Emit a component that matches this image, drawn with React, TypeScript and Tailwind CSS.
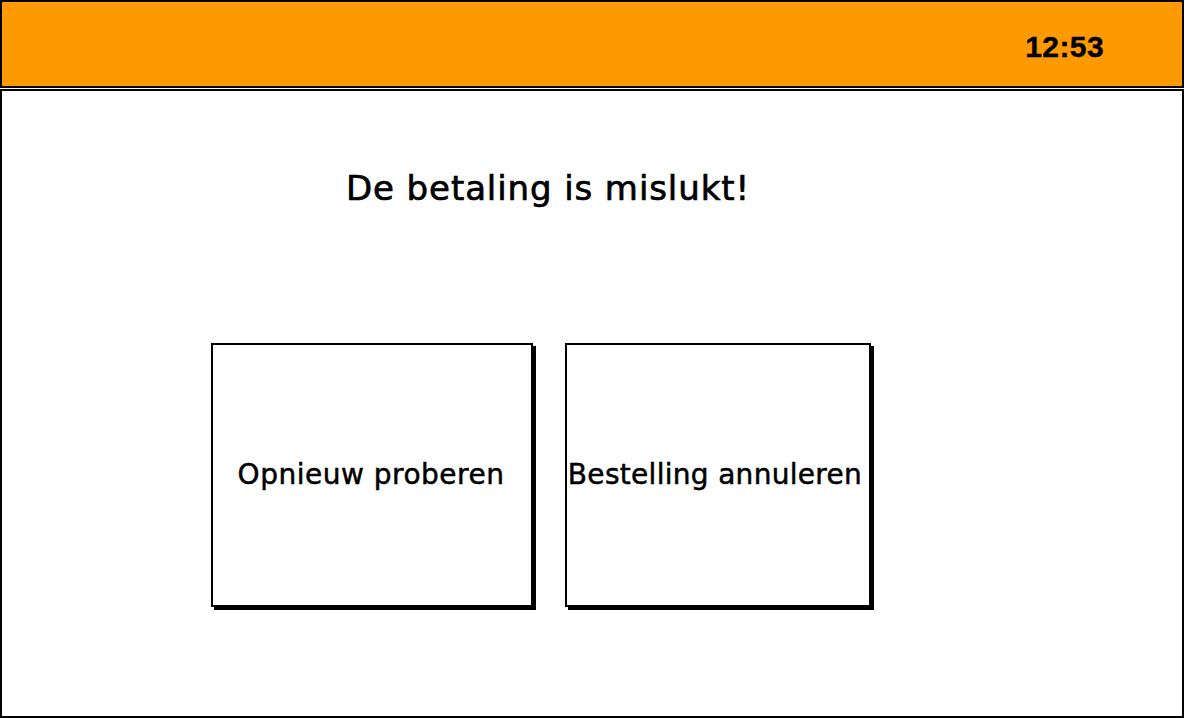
export default function App() {
  return (
    <div className="flex h-[718px] w-[1185px] flex-col bg-white font-['DejaVu_Sans',sans-serif] text-black">
      <header className="flex h-[88px] w-[1184px] items-center justify-end border-2 border-black bg-[#ff9900] pr-[78px] pt-[6px]">
        <span className="font-['Liberation_Sans',sans-serif] text-[30px] font-bold leading-none tracking-[0.4px] [-webkit-text-stroke:0.4px_black]">
          12:53
        </span>
      </header>

      <main className="mt-[1px] flex h-[629px] w-[1184px] flex-col border-2 border-black pl-[209px]">
        <div className="flex w-[662px] flex-col items-center">
          <h1 className="ml-[12px] mt-[80px] text-[34px] leading-none tracking-[0.9px] [-webkit-text-stroke:0.7px_black]">
            De betaling is mislukt!
          </h1>
        </div>

        <div className="mt-[138px] flex gap-[32px]">
          <button className="flex h-[264px] w-[322px] items-center justify-center border-2 border-black bg-white pr-[2px] text-[28px] tracking-[0.5px] shadow-[3px_3px_0_#000] [-webkit-text-stroke:0.5px_black]">
            Opnieuw proberen
          </button>
          <button className="flex h-[264px] w-[306px] items-center justify-center whitespace-nowrap border-2 border-black bg-white pr-[6px] text-[28px] tracking-[0.3px] shadow-[3px_3px_0_#000] [-webkit-text-stroke:0.5px_black]">
            Bestelling annuleren
          </button>
        </div>
      </main>
    </div>
  );
}
